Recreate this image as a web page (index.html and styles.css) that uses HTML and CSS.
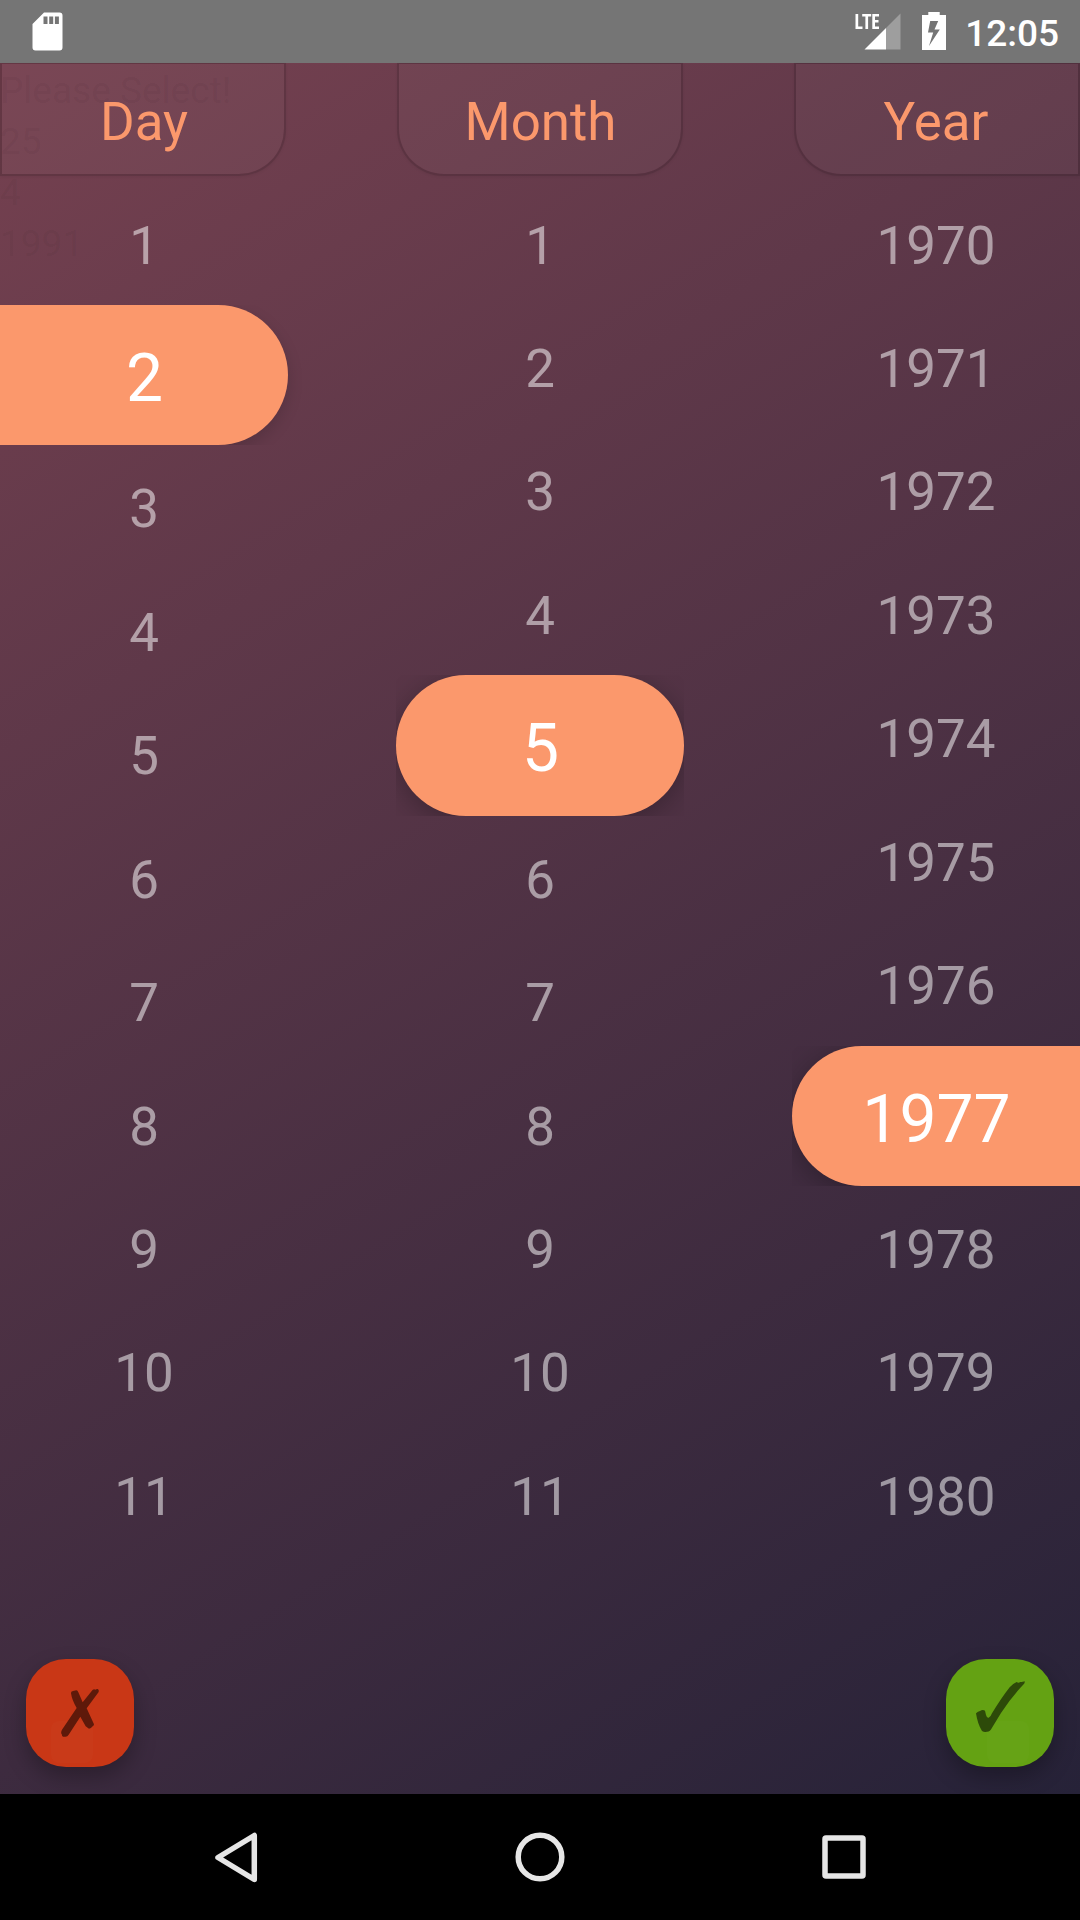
FILE: index.html
```html
<!DOCTYPE html>
<html lang="en">
<head>
<meta charset="utf-8">
<title>Date picker</title>
<link rel="stylesheet" href="styles.css">
</head>
<body>
<div class="screen">
  <header class="status">
    <svg class="sd" viewBox="0 0 31 39" width="31" height="39"><path fill="#fff" fill-rule="evenodd" d="M12 .5H27.500a3 3 0 0 1 3 3V35.500a3 3 0 0 1-3 3H3.500a3 3 0 0 1-3-3V12ZM11.500 4.500v7.500h4V4.500Zm5.700 0v7.500h4V4.500Zm5.700 0v7.500h4V4.500Z"/></svg>
    <div class="status-right">
      <svg class="signal" viewBox="0 0 46 37" width="46" height="37">
        <path fill="#fff" d="M.5 1h2.700v12.600h4.300v2.400h-7zM7.200 1h9v2.400h-3.100V16h-2.700V3.400H7.200zM17.300 1h6.700v2.400h-4v3.700h3.500v2.300H20v4.200h4V16h-6.700z"/>
        <path fill="#9e9e9e" d="M45.500.5V36.500H31V15z"/>
        <path fill="#fff" d="M31 15V36.500H9.500z"/>
      </svg>
      <svg class="battery" viewBox="0 0 24 38" width="24" height="38"><path fill="#fff" fill-rule="evenodd" d="M6.300 0h11.400v3H24v35H0V3h6.300ZM8.200 9 6 20.500h5.200L7 34 17.800 17.600h-5.300L16.200 9Z"/></svg>
      <span class="clock">12:05</span>
    </div>
  </header>

  <main class="picker">
    <div class="summary"><div>Please Select!</div><div>25</div><div>4</div><div>1991</div></div>
    <div class="columns">
      <section class="column day">
        <h2 class="heading">Day</h2>
        <ul class="list">
          <li class="item">1</li>
          <li class="item selected"><span class="pill">2</span></li>
          <li class="item">3</li><li class="item">4</li><li class="item">5</li><li class="item">6</li>
          <li class="item">7</li><li class="item">8</li><li class="item">9</li><li class="item">10</li><li class="item">11</li>
        </ul>
      </section>
      <section class="column month">
        <h2 class="heading">Month</h2>
        <ul class="list">
          <li class="item">1</li><li class="item">2</li><li class="item">3</li><li class="item">4</li>
          <li class="item selected"><span class="pill">5</span></li>
          <li class="item">6</li><li class="item">7</li><li class="item">8</li><li class="item">9</li><li class="item">10</li><li class="item">11</li>
        </ul>
      </section>
      <section class="column year">
        <h2 class="heading">Year</h2>
        <ul class="list">
          <li class="item">1970</li><li class="item">1971</li><li class="item">1972</li><li class="item">1973</li>
          <li class="item">1974</li><li class="item">1975</li><li class="item">1976</li>
          <li class="item selected"><span class="pill">1977</span></li>
          <li class="item">1978</li><li class="item">1979</li><li class="item">1980</li>
        </ul>
      </section>
    </div>
    <div class="actions">
      <button class="action cancel" aria-label="Cancel">
        <svg viewBox="0 0 324 324" width="108" height="108"><rect class="glow" x="75" y="186" width="126" height="126" rx="24"/><path fill="#5e190a" d="M135 103Q134 97 141 96L151 94Q155 94 157 100L170 130L199 94Q204 88 208 92Q212 89 215 90Q220 92 218 99L182 148L204 196Q204 201 200 202Q195 209 189 209L179 202L163 173L128 227Q124 235 115 233Q107 233 108 227Q103 222 108 212L152 147Q138 124 135 103Z"/></svg>
      </button>
      <button class="action confirm" aria-label="Confirm">
        <svg viewBox="0 0 324 324" width="108" height="108"><rect class="glow" x="123" y="186" width="126" height="126" rx="24"/><path fill="#2d4a09" d="M90 163Q96 157 102 156Q110 151 117 155L120 168Q123 178 128 176Q134 174 138 163Q166 117 191 85Q202 73 212 69Q217 73 223 69Q229 70 236 67Q237 72 233 76Q196 114 165 162L138 206Q132 219 122 218Q115 220 108 216Q95 196 90 163Z"/></svg>
      </button>
    </div>
  </main>

  <nav class="navbar">
    <svg viewBox="0 0 1080 126" width="1080" height="126" fill="none" stroke="#e6e6e6" stroke-width="5.500" stroke-linejoin="round">
      <path d="M254.300 41.500V85.500L218 63.500Z"/>
      <circle cx="540" cy="63" r="21.800"/>
      <rect x="825" y="44" width="38" height="38" rx="1"/>
    </svg>
  </nav>
</div>
</body>
</html>
```
FILE: styles.css
```css
* { box-sizing: border-box; }
body { margin: 0; font-family: Roboto, sans-serif; }
.screen { width: 1080px; height: 1920px; display: flex; flex-direction: column; overflow: hidden; }

.status {
  height: 63px; flex: none; padding: 0 21px 0 32px;
  display: flex; justify-content: space-between; align-items: flex-start;
  background: #757575;
}
.sd { margin-top: 12px; }
.status-right { display: flex; align-items: flex-start; }
.signal { margin-top: 13px; margin-right: 21px; }
.battery { margin-top: 12px; margin-right: 19px; }
.clock { font-size: 37px; font-weight: 500; line-height: 43px; color: #fff; padding-top: 12px; }

.picker {
  position: relative; flex: 1;
  display: flex; flex-direction: column; justify-content: space-between;
  background: linear-gradient(148.04deg, #764150, #262238);
}
.summary {
  position: absolute; left: 0; top: 2px;
  font-size: 37px; line-height: 51px; color: rgba(0, 0, 0, .055);
}
.columns { display: flex; justify-content: space-between; }
.column { width: 288px; display: flex; flex-direction: column; }
.month { align-items: center; }
.year { align-items: flex-end; }

.heading {
  width: 286px; height: 113px; margin: 0; padding-top: 6px;
  display: flex; justify-content: center; align-items: center;
  font-size: 52.900px; font-weight: 400; color: #fb986c;
  background: rgba(255, 255, 255, .03); background-clip: padding-box;
  border: 2px solid rgba(0, 0, 0, .14); border-top-width: 1px;
  box-shadow: 0 1px 3px rgba(0, 0, 0, .06);
}
.day .heading { border-bottom-right-radius: 47px; padding-left: 2px; }
.month .heading { border-radius: 0 0 47px 47px; padding-left: 1px; }
.year .heading { border-bottom-left-radius: 47px; padding-right: 2px; }

.list { width: 288px; margin: 5.500px 0 0; padding: 0; list-style: none; }
.item {
  height: 123.450px; padding-top: 4.600px;
  display: flex; justify-content: center; align-items: center;
  font-size: 52.900px; color: rgba(255, 255, 255, .52);
}
.selected { height: 140.400px; padding: 0; overflow: hidden; }
.day .selected { width: 310px; justify-content: flex-start; }
.pill {
  width: 288px; height: 100%; padding: 7px 0 0 1px;
  display: flex; justify-content: center; align-items: center;
  font-size: 66px; color: #fff; background: #fb986c;
  box-shadow: 0 6px 28px rgba(0, 0, 0, .27);
}
.day .pill { border-radius: 0 70px 70px 0; box-shadow: 0 6px 16px rgba(0, 0, 0, .15); }
.month .pill { border-radius: 70px; }
.year .pill { border-radius: 70px 0 0 70px; }

.actions { display: flex; justify-content: space-between; padding: 0 26px 27px; }
.action {
  width: 108px; height: 108px; padding: 0; border: 0; border-radius: 40px;
  box-shadow: 0 10px 22px rgba(0, 0, 0, .28);
}
.action svg { display: block; }
.glow { fill: rgba(255, 255, 255, .015); }
.cancel { background: #c93716; }
.confirm { background: #64a213; }

.navbar { height: 126px; flex: none; background: #000; }
.navbar svg { display: block; }
```
